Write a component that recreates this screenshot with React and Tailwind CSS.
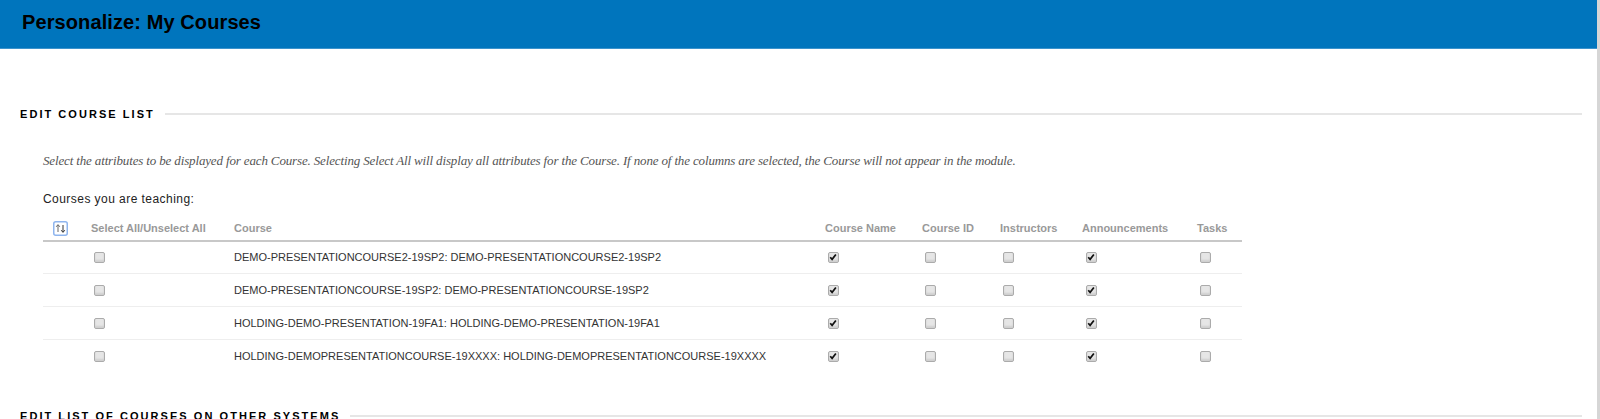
import React from 'react'

const courses = [
  'DEMO-PRESENTATIONCOURSE2-19SP2: DEMO-PRESENTATIONCOURSE2-19SP2',
  'DEMO-PRESENTATIONCOURSE-19SP2: DEMO-PRESENTATIONCOURSE-19SP2',
  'HOLDING-DEMO-PRESENTATION-19FA1: HOLDING-DEMO-PRESENTATION-19FA1',
  'HOLDING-DEMOPRESENTATIONCOURSE-19XXXX: HOLDING-DEMOPRESENTATIONCOURSE-19XXXX',
]

const Checkbox = ({ checked }) => (
  <span className="block w-[11px] h-[11px] rounded-[2px] border border-[#ababab] bg-[#e6e6e6] shadow-[inset_0_-2px_2px_#cfcfcf]">
    {checked && (
      <svg viewBox="0 0 11 11" className="w-[9px] h-[9px]">
        <path d="M1.5 5.2 L3.8 7.8 L8.4 1.8" fill="none" stroke="#111" strokeWidth="2.1" />
      </svg>
    )}
  </span>
)

const SectionHeading = ({ children }) => (
  <div className="flex items-center pr-[15px]">
    <h2 className="text-[11px] font-bold tracking-[2.05px] text-black whitespace-nowrap pr-[10px]">{children}</h2>
    <div className="flex-1 h-[2px] bg-[#e6e6e6]"></div>
  </div>
)

const SortIcon = () => (
  <svg viewBox="0 0 15 15" className="w-[15px] h-[15px] block">
    <rect x="0.75" y="0.75" width="13.5" height="13.5" rx="2" fill="#fff" stroke="#8fb5ee" strokeWidth="1.5" />
    <path d="M5 11V4M3.2 5.8 5 3.6l1.8 2.2" fill="none" stroke="#666" strokeWidth="1" />
    <path d="M10 4v7M8.2 9.2 10 11.4l1.8-2.2" fill="none" stroke="#333" strokeWidth="1" />
  </svg>
)

export default function App() {
  const headCell = 'text-left font-bold text-[#999] px-[10px] whitespace-nowrap'
  return (
    <div className="h-screen overflow-hidden flex font-['Liberation_Sans',Arial,sans-serif]">
      <div className="flex-1 min-w-0">
        <div className="h-[49px] bg-[#0075bd] border-b border-[#3c93cc] pl-[22px] flex items-center">
          <h1 className="text-[20px] font-bold text-black leading-none pb-[4px] tracking-[0.1px]">Personalize: My Courses</h1>
        </div>

        <div className="pl-[20px] pt-[57px]">
          <SectionHeading>EDIT COURSE LIST</SectionHeading>

          <div className="pl-[23px]">
            <p className="mt-[30px] text-[13px] italic text-[#555] leading-[16px] font-['Liberation_Serif',Georgia,serif] tracking-[-0.145px] whitespace-nowrap">
              Select the attributes to be displayed for each Course. Selecting Select All will display all attributes for the Course. If none of the columns are selected, the Course will not appear in the module.
            </p>
            <p className="mt-[23px] text-[12px] leading-[14px] text-[#222] tracking-[0.45px]">Courses you are teaching:</p>

            <table className="mt-[12px] w-[1199px] table-fixed border-collapse text-[11px]">
              <colgroup>
                <col className="w-[38px]" />
                <col className="w-[143px]" />
                <col className="w-[591px]" />
                <col className="w-[97px]" />
                <col className="w-[78px]" />
                <col className="w-[82px]" />
                <col className="w-[115px]" />
                <col className="w-[55px]" />
              </colgroup>
              <thead>
                <tr className="h-[23px] border-b-2 border-[#c8c8c8]">
                  <th className="pl-[10px]"><SortIcon /></th>
                  <th className={headCell}>Select All/Unselect All</th>
                  <th className={headCell}>Course</th>
                  <th className={headCell}>Course Name</th>
                  <th className={headCell}>Course ID</th>
                  <th className={headCell}>Instructors</th>
                  <th className={headCell}>Announcements</th>
                  <th className={headCell}>Tasks</th>
                </tr>
              </thead>
              <tbody>
                {courses.map((name) => (
                  <tr key={name} className="h-[33px] border-b border-[#eeeeee] last:border-b-0">
                    <td></td>
                    <td className="pl-[13px]"><Checkbox /></td>
                    <td className="px-[10px] text-[#333] whitespace-nowrap">{name}</td>
                    <td className="pl-[13px]"><Checkbox checked /></td>
                    <td className="pl-[13px]"><Checkbox /></td>
                    <td className="pl-[13px]"><Checkbox /></td>
                    <td className="pl-[14px]"><Checkbox checked /></td>
                    <td className="pl-[13px]"><Checkbox /></td>
                  </tr>
                ))}
              </tbody>
            </table>
          </div>

          <div className="mt-[35px]">
            <SectionHeading>EDIT LIST OF COURSES ON OTHER SYSTEMS</SectionHeading>
          </div>
        </div>
      </div>
      <div className="w-[3px] bg-[#d6d6d6]"></div>
    </div>
  )
}
